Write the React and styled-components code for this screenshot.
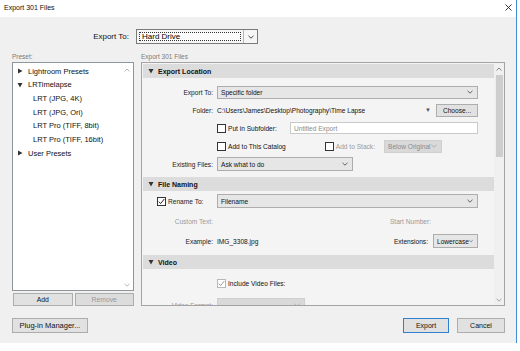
import React from 'react';
import styled, { createGlobalStyle } from 'styled-components';

const Global = createGlobalStyle`
  html, body { margin: 0; padding: 0; background: #ffffff; }
  body { font-family: "Liberation Sans", Arial, sans-serif; color: #000; }
  * { box-sizing: border-box; }
`;

const Window = styled.div`
  width: 517px;
  height: 343px;
  border-right: 1px solid #3d8ed6;
  display: flex;
  flex-direction: column;
  background: #f0f0f0;
`;

const TitleBar = styled.div`
  height: 17px;
  background: #ffffff;
  display: flex;
  align-items: center;
  justify-content: space-between;
  padding: 0 4px 3px 4px;
  font-size: 7px;
  color: #111;
`;

const CloseX = styled.svg`
  width: 7px;
  height: 7px;
  margin-right: 0px;
`;

const Body = styled.div`
  flex: 1;
  display: flex;
  flex-direction: column;
  padding: 12px 11px 0 12px;
`;

const TopRow = styled.div`
  height: 15px;
  display: flex;
  align-items: center;
  gap: 7px;
`;

const TopLabel = styled.div`
  width: 117px;
  text-align: right;
  font-size: 8px;
  color: #111;
`;

const TopSelect = styled.div`
  width: 122px;
  height: 15px;
  border: 1px solid #7a7a7a;
  background: #f6f6f6;
  display: flex;
  align-items: stretch;
`;

const FocusText = styled.div`
  flex: 1;
  margin: 2px;
  border: 1px dotted #333;
  font-size: 8px;
  display: flex;
  align-items: center;
  padding-left: 2px;
  color: #000;
  background: #fbfbfb;
`;

const ChevronCell = styled.div`
  width: 14px;
  border-left: 1px solid #b5b5b5;
  display: flex;
  align-items: center;
  justify-content: center;
`;

const ColHeads = styled.div`
  margin-top: 6px;
  height: 12px;
  display: grid;
  grid-template-columns: 122px 364px;
  column-gap: 7px;
  align-items: center;
  font-size: 6.5px;
  color: #7a7a7a;
`;

const Main = styled.div`
  height: 244px;
  display: grid;
  grid-template-columns: 122px 364px;
  column-gap: 7px;
`;

const LeftCol = styled.div`
  display: flex;
  flex-direction: column;
  gap: 2px;
`;

const PresetList = styled.div`
  height: 229px;
  background: #ffffff;
  border: 1px solid #8f959d;
  display: flex;
`;

const Tree = styled.div`
  flex: 1;
  padding-top: 1.5px;
`;

const TreeRow = styled.div`
  height: 13.67px;
  display: flex;
  align-items: center;
  padding-left: ${p => (p.$child ? 20 : 4)}px;
  font-size: 7.5px;
  color: #111;
  white-space: nowrap;
`;

const Twisty = styled.svg`
  width: 6px;
  height: 6px;
  margin-right: 5px;
`;

const ListScroll = styled.div`
  width: 12px;
  display: flex;
  flex-direction: column;
  justify-content: space-between;
  align-items: center;
  padding: 5px 0 3px;
`;

const ButtonPair = styled.div`
  height: 13px;
  display: grid;
  grid-template-columns: 1fr 1fr;
  column-gap: 2px;
  padding-left: 1px;
`;

const Button = styled.div`
  height: ${p => p.$h || 15}px;
  width: ${p => (p.$w ? p.$w + 'px' : 'auto')};
  background: ${p => (p.$disabled ? '#dcdcdc' : '#e1e1e1')};
  border: 1px solid ${p => (p.$primary ? '#2f7fd0' : '#adadad')};
  display: flex;
  align-items: center;
  justify-content: center;
  font-size: ${p => p.$fs || 7.5}px;
  color: ${p => (p.$disabled ? '#9a9a9a' : '#111')};
  white-space: nowrap;
`;

const Panel = styled.div`
  height: 244px;
  border: 1px solid #a3a3a3;
  display: flex;
  overflow: hidden;
`;

const PanelContent = styled.div`
  flex: 1;
  padding: 1px 0 0 1px;
  background: #f4f4f4;
  overflow: hidden;
`;

const SectionHeader = styled.div`
  height: 14px;
  background: #dcdcdc;
  display: flex;
  align-items: center;
  padding-left: 5px;
  font-size: 7px;
  font-weight: bold;
  color: #111;
`;

const SectionBody = styled.div`
  display: flex;
  flex-direction: column;
  gap: ${p => p.$gap}px;
  padding: ${p => p.$pad};
`;

const Row = styled.div`
  height: 14px;
  display: grid;
  grid-template-columns: 70px 261px;
  column-gap: 4px;
  align-items: center;
`;

const Label = styled.div`
  text-align: right;
  font-size: 6.6px;
  color: ${p => (p.$muted ? '#9a9a9a' : '#222')};
  white-space: nowrap;
`;

const CheckLabel = styled.div`
  display: flex;
  align-items: center;
  padding-left: 14px;
  font-size: 6.6px;
  color: #222;
  white-space: nowrap;
`;

const Control = styled.div`
  display: flex;
  align-items: center;
  font-size: 6.6px;
  color: ${p => (p.$muted ? '#9a9a9a' : '#111')};
  white-space: nowrap;
  justify-content: ${p => p.$justify || 'flex-start'};
`;

const Select = styled.div`
  width: ${p => p.$w}px;
  height: ${p => p.$h || 14}px;
  flex-shrink: 0;
  background: ${p => (p.$disabled ? '#d9d9d9' : '#e6e6e6')};
  border: 1px solid ${p => (p.$disabled ? '#cfcfcf' : '#adadad')};
  display: flex;
  align-items: center;
  justify-content: space-between;
  padding: 0 4px 0 3px;
  font-size: 6.6px;
  color: ${p => (p.$disabled ? '#8a8a8a' : '#111')};
  margin-left: ${p => p.$ml || 0}px;
`;

const TextInput = styled.div`
  width: ${p => p.$w}px;
  height: 12px;
  background: #ffffff;
  border: 1px solid #cacaca;
  display: flex;
  align-items: center;
  padding-left: 3px;
  font-size: 6.6px;
  color: #8a8a8a;
  margin-left: auto;
`;

const Box = styled.svg`
  width: 9px;
  height: 9px;
  margin-right: 2px;
  flex-shrink: 0;
`;

const Spacer = styled.div`
  width: ${p => p.$w}px;
  flex-shrink: 0;
`;

const Grow = styled.div`
  flex: 1;
`;

const SmallArrow = styled.span`
  font-size: 6px;
  color: #555;
  margin-right: 5px;
`;

const Scrollbar = styled.div`
  width: 10px;
  background: #f0f0f0;
  display: flex;
  flex-direction: column;
  align-items: center;
`;

const ScrollArrow = styled.div`
  height: 11px;
  width: 10px;
  display: flex;
  align-items: center;
  justify-content: center;
`;

const Thumb = styled.div`
  margin-top: 1px;
  width: 7px;
  height: 82px;
  background: #cdcdcd;
`;

const Footer = styled.div`
  margin-top: 12px;
  height: 15px;
  display: flex;
  align-items: center;
  gap: 8px;
`;

const Chevron = ({ up, color = '#555' }) => (
  <svg width="6" height="4" viewBox="0 0 6 4">
    <path d={up ? 'M0.5 3.5 L3 1 L5.5 3.5' : 'M0.5 0.8 L3 3.2 L5.5 0.8'} fill="none" stroke={color} strokeWidth="0.9" />
  </svg>
);

const Check = ({ checked, disabled }) => (
  <Box viewBox="0 0 9 9">
    <rect x="0.5" y="0.5" width="8" height="8" fill="#fff" stroke={disabled ? '#b8b8b8' : '#333'} />
    {checked && (
      <path d="M1.8 4.6 L3.6 6.6 L7.3 2" fill="none" stroke={disabled ? '#9a9a9a' : '#222'} strokeWidth="1" />
    )}
  </Box>
);

const Tri = ({ open, color = '#333' }) => (
  <Twisty viewBox="0 0 6 6">
    {open ? <path d="M0.5 1 L5.5 1 L3 5.5 Z" fill={color} /> : <path d="M1 0.5 L5.5 3 L1 5.5 Z" fill={color} />}
  </Twisty>
);

const HeaderTri = styled.svg`
  width: 6px;
  height: 6px;
  margin-right: 4px;
`;

const Section = ({ title }) => (
  <SectionHeader>
    <HeaderTri viewBox="0 0 6 6">
      <path d="M0.5 1 L5.5 1 L3 5.5 Z" fill="#333" />
    </HeaderTri>
    {title}
  </SectionHeader>
);

export default function App() {
  return (
    <>
      <Global />
      <Window>
        <TitleBar>
          <span>Export 301 Files</span>
          <CloseX viewBox="0 0 7 7">
            <path d="M0.5 0.5 L6.5 6.5 M6.5 0.5 L0.5 6.5" stroke="#222" strokeWidth="0.9" />
          </CloseX>
        </TitleBar>
        <Body>
          <TopRow>
            <TopLabel>Export To:</TopLabel>
            <TopSelect>
              <FocusText>Hard Drive</FocusText>
              <ChevronCell>
                <Chevron color="#333" />
              </ChevronCell>
            </TopSelect>
          </TopRow>
          <ColHeads>
            <span>Preset:</span>
            <span>Export 301 Files</span>
          </ColHeads>
          <Main>
            <LeftCol>
              <PresetList>
                <Tree>
                  <TreeRow><Tri />Lightroom Presets</TreeRow>
                  <TreeRow><Tri open />LRTimelapse</TreeRow>
                  <TreeRow $child>LRT (JPG, 4K)</TreeRow>
                  <TreeRow $child>LRT (JPG, Ori)</TreeRow>
                  <TreeRow $child>LRT Pro (TIFF, 8bit)</TreeRow>
                  <TreeRow $child>LRT Pro (TIFF, 16bit)</TreeRow>
                  <TreeRow><Tri />User Presets</TreeRow>
                </Tree>
                <ListScroll>
                  <Chevron up color="#b0b0b0" />
                  <Chevron color="#b0b0b0" />
                </ListScroll>
              </PresetList>
              <ButtonPair>
                <Button $h={13} $fs={6.8}>Add</Button>
                <Button $h={13} $fs={6.8} $disabled>Remove</Button>
              </ButtonPair>
            </LeftCol>
            <Panel>
              <PanelContent>
                <Section title="Export Location" />
                <SectionBody $gap={4} $pad="7px 0 6px 0">
                  <Row>
                    <Label>Export To:</Label>
                    <Control>
                      <Select $w={261} $h={13}>Specific folder<Chevron /></Select>
                    </Control>
                  </Row>
                  <Row>
                    <Label>Folder:</Label>
                    <Control>
                      C:\Users\James\Desktop\Photography\Time Lapse
                      <Grow />
                      <SmallArrow>▼</SmallArrow>
                      <Button $w={42} $h={13} $fs={6.6}>Choose...</Button>
                    </Control>
                  </Row>
                  <Row>
                    <span />
                    <Control>
                      <Check />
                      Put in Subfolder:
                      <TextInput $w={188}>Untitled Export</TextInput>
                    </Control>
                  </Row>
                  <Row>
                    <span />
                    <Control>
                      <Check />
                      Add to This Catalog
                      <Grow />
                      <Check />
                      <Label $muted>Add to Stack:</Label>
                      <Select $w={58} $h={13} $ml={9} $disabled>Below Original<Chevron color="#aaa" /></Select>
                      <Spacer $w={36} />
                    </Control>
                  </Row>
                  <Row>
                    <Label>Existing Files:</Label>
                    <Control>
                      <Select $w={136}>Ask what to do<Chevron /></Select>
                    </Control>
                  </Row>
                </SectionBody>
                <Section title="File Naming" />
                <SectionBody $gap={6} $pad="3px 0 7px 0">
                  <Row>
                    <CheckLabel><Check checked />Rename To:</CheckLabel>
                    <Control>
                      <Select $w={261}>Filename<Chevron /></Select>
                    </Control>
                  </Row>
                  <Row>
                    <Label $muted>Custom Text:</Label>
                    <Control $muted $justify="flex-end">
                      Start Number:
                      <Spacer $w={47} />
                    </Control>
                  </Row>
                  <Row>
                    <Label>Example:</Label>
                    <Control>
                      IMG_3308.jpg
                      <Grow />
                      Extensions:
                      <Select $w={45} $ml={5}>Lowercase<Chevron /></Select>
                    </Control>
                  </Row>
                </SectionBody>
                <Section title="Video" />
                <SectionBody $gap={8} $pad="7px 0 0 0">
                  <Row>
                    <span />
                    <Control>
                      <Check checked disabled />
                      Include Video Files:
                    </Control>
                  </Row>
                  <Row>
                    <Label $muted>Video Format:</Label>
                    <Control>
                      <Select $w={88} $disabled><span /><Chevron color="#aaa" /></Select>
                    </Control>
                  </Row>
                </SectionBody>
              </PanelContent>
              <Scrollbar>
                <ScrollArrow><Chevron up color="#777" /></ScrollArrow>
                <Thumb />
                <Grow />
                <ScrollArrow><Chevron color="#999" /></ScrollArrow>
              </Scrollbar>
            </Panel>
          </Main>
          <Footer>
            <Button $w={76} $fs={7.5}>Plug-in Manager...</Button>
            <Grow />
            <Button $w={46} $fs={7} $primary>Export</Button>
            <Button $w={48} $fs={7}>Cancel</Button>
          </Footer>
        </Body>
      </Window>
    </>
  );
}
